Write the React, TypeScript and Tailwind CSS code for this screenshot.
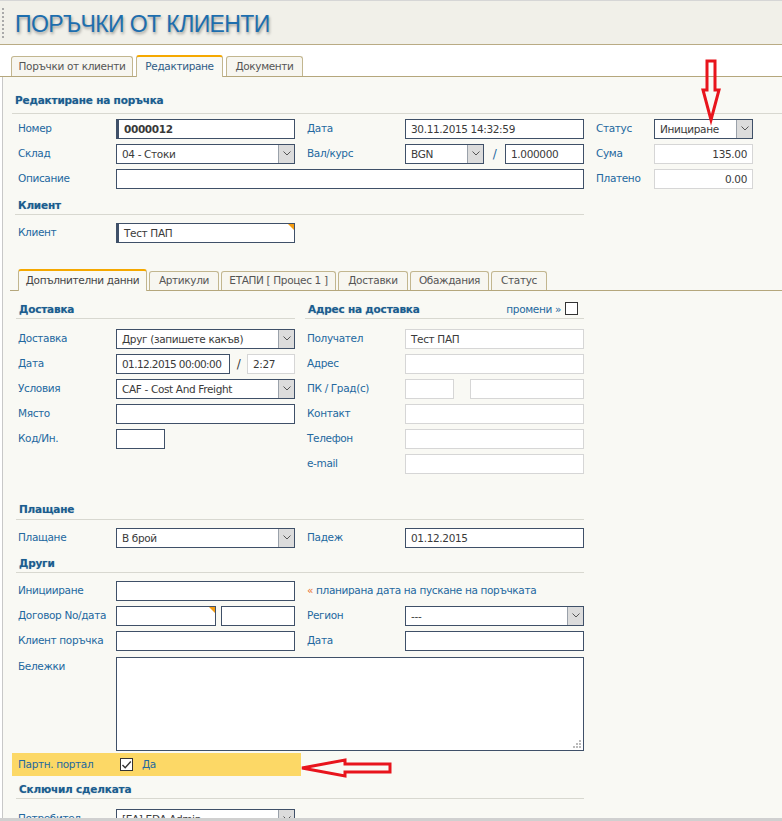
import clsx from "clsx";
import type { ReactNode } from "react";

type FieldProps = {
  w: string;
  value?: string;
  bold?: boolean;
  thick?: boolean;
  light?: boolean;
  right?: boolean;
  flag?: boolean;
  tight?: boolean;
};

function Field({ w, value, bold, thick, light, right, flag, tight }: FieldProps) {
  return (
    <div
      className={clsx(
        "relative h-[20px] shrink-0 overflow-hidden whitespace-nowrap bg-white px-[5px] leading-[18px] text-[#3a3a3a]",
        w,
        light ? "border border-[#d6d6d6]" : "border border-[#3f5068]",
        thick && "border-l-[3px] pl-[5px]",
        bold && "font-bold",
        right && "text-right",
        tight && "px-[4px] tracking-[-0.6px]",
      )}
    >
      {value}
      {flag && (
        <span className="absolute right-0 top-0 h-0 w-0 border-l-[6px] border-t-[6px] border-l-transparent border-t-[#f39c12]" />
      )}
    </div>
  );
}

function Select({ w, value }: { w: string; value: string }) {
  return (
    <div className={clsx("flex h-[20px] shrink-0 border border-[#3f5068] bg-white", w)}>
      <div className="flex-1 overflow-hidden whitespace-nowrap px-[5px] leading-[18px] text-[#3a3a3a]">
        {value}
      </div>
      <div className="flex w-[16px] items-center justify-center border-l border-[#9aa1aa] bg-[#dcdcdc]">
        <svg width="8" height="5" viewBox="0 0 8 5">
          <polyline points="0.5,0.5 4,4 7.5,0.5" fill="none" stroke="#555" strokeWidth="1" />
        </svg>
      </div>
    </div>
  );
}

function Label({ children, w = "w-[98px]", ml }: { children?: ReactNode; w?: string; ml?: boolean }) {
  return <div className={clsx("shrink-0 whitespace-nowrap text-[#23689f]", w, ml && "ml-[12px]")}>{children}</div>;
}

function Row({ children, className }: { children: ReactNode; className?: string }) {
  return <div className={clsx("flex h-[25px] items-center pl-[6px]", className)}>{children}</div>;
}

function Head({ children, className }: { children: ReactNode; className: string }) {
  return (
    <div
      className={clsx(
        "border-b border-[#d8d8d0] pb-[2px] pl-[3px] font-bold leading-[14px] tracking-[-0.2px] text-[#1b5d8f] [text-shadow:0_0_1px_rgba(27,93,143,0.35)]",
        className,
      )}
    >
      {children}
    </div>
  );
}

function Tab({ label, w, active }: { label: string; w: string; active?: boolean }) {
  return (
    <div
      className={clsx(
        "flex shrink-0 items-center justify-center rounded-t-[3px] border border-b-0 border-[#c2b68f] whitespace-nowrap",
        w,
        active
          ? "-mb-px h-[22px] border-t-2 border-t-[#f5a800] bg-[#f9f9f4] text-[#2f5c86]"
          : "h-[20px] bg-[#f7f6f0] text-[#555]",
      )}
    >
      {label}
    </div>
  );
}

function InnerTab({ label, w, active }: { label: string; w: string; active?: boolean }) {
  return (
    <div
      className={clsx(
        "flex shrink-0 items-center justify-center rounded-t-[3px] border border-b-0 border-[#c2b68f] whitespace-nowrap",
        w,
        active
          ? "-mb-px h-[22px] border-t-2 border-t-[#f5a800] bg-[#f9f9f4] text-[#444]"
          : "h-[19px] bg-[#f7f6f0] text-[#555]",
      )}
    >
      {label}
    </div>
  );
}

function Check({ checked }: { checked?: boolean }) {
  return (
    <div className="flex h-[13px] w-[13px] shrink-0 items-center justify-center border border-[#333] bg-white">
      {checked && (
        <svg width="11" height="10" viewBox="0 0 11 10">
          <path d="M1.5 5 L4.2 7.8 L9.8 1.5" fill="none" stroke="#333" strokeWidth="1.4" />
        </svg>
      )}
    </div>
  );
}

export default function App() {
  return (
    <div className="relative flex h-[821px] w-[782px] flex-col overflow-hidden bg-white font-['DejaVu_Sans',sans-serif] text-[10.5px] tracking-[-0.35px]">
      {/* page title */}
      <div className="flex h-[45px] shrink-0 items-center border-b border-t border-b-[#b9ab84] border-t-[#d6d6d6] bg-[#f1f0e9]">
        <div className="ml-[2px] h-[30px] border-l-2 border-dotted border-[#a9a9a9]" />
        <div className="ml-[11px] pt-[3px] font-['Liberation_Sans',sans-serif] text-[23px] tracking-[-0.6px] text-[#1d6eae] [text-shadow:1px_2px_3px_rgba(0,0,0,0.35)]">
          ПОРЪЧКИ ОТ КЛИЕНТИ
        </div>
      </div>

      <div className="h-[10px] shrink-0" />

      {/* main tabs */}
      <div className="flex h-[22px] shrink-0 items-end gap-[3px] border-b border-[#b5a77c] pl-[11px]">
        <Tab label="Поръчки от клиенти" w="w-[122px]" />
        <Tab label="Редактиране" w="w-[87px]" active />
        <Tab label="Документи" w="w-[77px]" />
      </div>

      <div className="ml-[2px] min-h-0 flex-1 overflow-hidden border-l border-[#c8c8c8] bg-[#f9f9f4]">
        <div className="pl-[9px]">
          <Head className="pt-[16px] pb-[6px]">Редактиране на поръчка</Head>

          <Row className="mt-[2px]">
            <Label>Номер</Label>
            <Field w="w-[179px]" value="0000012" bold thick />
            <Label ml>Дата</Label>
            <Field w="w-[179px]" value="30.11.2015 14:32:59" />
            <Label ml w="w-[58px]">Статус</Label>
            <Select w="w-[99px]" value="Инициране" />
          </Row>
          <Row>
            <Label>Склад</Label>
            <Select w="w-[179px]" value="04 - Стоки" />
            <Label ml>Вал/курс</Label>
            <Select w="w-[79px]" value="BGN" />
            <div className="w-[21px] shrink-0 text-center text-[12px] text-[#23689f]">/</div>
            <Field w="w-[79px]" value="1.000000" />
            <Label ml w="w-[58px]">Сума</Label>
            <Field w="w-[99px]" value="135.00" light right />
          </Row>
          <Row>
            <Label>Описание</Label>
            <Field w="w-[468px]" />
            <Label ml w="w-[58px]">Платено</Label>
            <Field w="w-[99px]" value="0.00" light right />
          </Row>

          <Head className="ml-[3px] w-[569px] pt-[7px]">Клиент</Head>
          <Row className="mt-[5px]">
            <Label>Клиент</Label>
            <Field w="w-[179px]" value="Тест ПАП" thick flag />
          </Row>

          {/* inner tabs */}
          <div className="-ml-[2px] mt-[24px] flex h-[22px] items-end gap-[2px] border-b border-[#b5a77c] pl-[8px]">
            <InnerTab label="Допълнителни данни" w="w-[129px]" active />
            <InnerTab label="Артикули" w="w-[70px]" />
            <InnerTab label="ЕТАПИ [ Процес 1 ]" w="w-[115px]" />
            <InnerTab label="Доставки" w="w-[70px]" />
            <InnerTab label="Обаждания" w="w-[79px]" />
            <InnerTab label="Статус" w="w-[56px]" />
          </div>

          <div className="flex">
            <Head className="ml-[4px] w-[279px] pt-[11px]">Доставка</Head>
            <div className="ml-[10px] flex w-[279px] items-end border-b border-[#d8d8d0] pb-[2px] pl-[3px] leading-[14px]">
              <span className="flex-1 font-bold tracking-[-0.2px] text-[#1b5d8f] [text-shadow:0_0_1px_rgba(27,93,143,0.35)]">
                Адрес на доставка
              </span>
              <span className="mr-[4px] text-[#23689f]">промени »</span>
              <div className="mb-px mr-[6px]">
                <Check />
              </div>
            </div>
          </div>

          <Row className="mt-[7px]">
            <Label>Доставка</Label>
            <Select w="w-[179px]" value="Друг (запишете какъв)" />
            <Label ml>Получател</Label>
            <Field w="w-[179px]" value="Тест ПАП" light />
          </Row>
          <Row>
            <Label>Дата</Label>
            <Field w="w-[114px]" value="01.12.2015 00:00:00" tight />
            <div className="w-[17px] shrink-0 text-center text-[12px] text-[#3a3a3a]">/</div>
            <Field w="w-[48px]" value="2:27" light />
            <Label ml>Адрес</Label>
            <Field w="w-[179px]" light />
          </Row>
          <Row>
            <Label>Условия</Label>
            <Select w="w-[179px]" value="CAF - Cost And Freight" />
            <Label ml>ПК / Град(с)</Label>
            <Field w="w-[49px]" light />
            <div className="w-[16px] shrink-0" />
            <Field w="w-[114px]" light />
          </Row>
          <Row>
            <Label>Място</Label>
            <Field w="w-[179px]" />
            <Label ml>Контакт</Label>
            <Field w="w-[179px]" light />
          </Row>
          <Row>
            <Label>Код/Ин.</Label>
            <div className="w-[179px] shrink-0">
              <Field w="w-[49px]" />
            </div>
            <Label ml>Телефон</Label>
            <Field w="w-[179px]" light />
          </Row>
          <Row>
            <Label />
            <div className="w-[179px] shrink-0" />
            <Label ml>e-mail</Label>
            <Field w="w-[179px]" light />
          </Row>

          <Head className="ml-[4px] w-[568px] pt-[26px] pb-[3px]">Плащане</Head>
          <Row className="mt-[5px]">
            <Label>Плащане</Label>
            <Select w="w-[179px]" value="В брой" />
            <Label ml>Падеж</Label>
            <Field w="w-[179px]" value="01.12.2015" />
          </Row>

          <Head className="ml-[4px] w-[568px] pt-[6px]">Други</Head>
          <Row className="mt-[5px]">
            <Label>Иницииране</Label>
            <Field w="w-[179px]" />
            <div className="ml-[12px] whitespace-nowrap text-[#23689f]">
              <span className="text-[#e8702a]">«</span> планирана дата на пускане на поръчката
            </div>
          </Row>
          <Row>
            <Label>Договор No/дата</Label>
            <Field w="w-[100px]" flag />
            <div className="w-[5px] shrink-0" />
            <Field w="w-[74px]" />
            <Label ml>Регион</Label>
            <Select w="w-[179px]" value="---" />
          </Row>
          <Row>
            <Label>Клиент поръчка</Label>
            <Field w="w-[179px]" />
            <Label ml>Дата</Label>
            <Field w="w-[179px]" />
          </Row>
          <div className="mt-[4px] flex pl-[6px]">
            <Label>
              <div className="pt-[2px]">Бележки</div>
            </Label>
            <div className="relative h-[94px] w-[468px] shrink-0 border border-[#3f5068] bg-white">
              <svg className="absolute bottom-[2px] right-[2px]" width="8" height="8" viewBox="0 0 8 8">
                <rect x="6" y="0" width="2" height="2" fill="#bbb" />
                <rect x="3" y="3" width="2" height="2" fill="#bbb" />
                <rect x="6" y="3" width="2" height="2" fill="#bbb" />
                <rect x="0" y="6" width="2" height="2" fill="#bbb" />
                <rect x="3" y="6" width="2" height="2" fill="#bbb" />
                <rect x="6" y="6" width="2" height="2" fill="#bbb" />
              </svg>
            </div>
          </div>

          <div className="mt-[2px] flex h-[23px] w-[289px] items-center bg-[#fcd866] pl-[6px]">
            <div className="w-[102px] shrink-0 text-[#23689f]">Партн. портал</div>
            <Check checked />
            <span className="ml-[9px] text-[#23689f]">Да</span>
          </div>

          <Head className="ml-[4px] w-[568px] pt-[6px]">Сключил сделката</Head>
          <Row className="mt-[7px]">
            <Label>Потребител</Label>
            <Select w="w-[179px]" value="[EA] EDA Admin" />
          </Row>
        </div>
      </div>

      <div className="h-[3px] shrink-0 bg-[#d0d0d0]" />

      {/* red annotation arrows */}
      <svg className="pointer-events-none absolute left-[698px] top-[56px]" width="28" height="70" viewBox="0 0 28 70">
        <polygon
          points="9,5 17,5 17,34 21,34 13,64 5,34 9,34"
          fill="none"
          stroke="#e8141c"
          strokeWidth="3"
          strokeLinejoin="miter"
        />
      </svg>
      <svg className="pointer-events-none absolute left-[298px] top-[755px]" width="98" height="26" viewBox="0 0 98 26">
        <polygon
          points="4,13 47,5 47,9 92,9 92,17 47,17 47,21"
          fill="none"
          stroke="#e8141c"
          strokeWidth="3"
          strokeLinejoin="miter"
        />
      </svg>
    </div>
  );
}
